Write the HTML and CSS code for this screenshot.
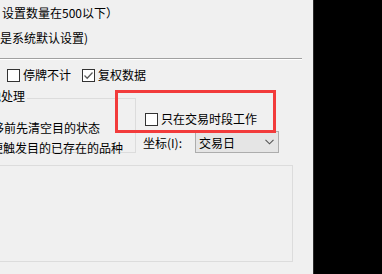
FILE: index.html
```html
<!DOCTYPE html>
<html lang="zh-CN">
<head>
    <meta charset="UTF-8">
    <title>设置</title>
    <link rel="stylesheet" href="styles.css">
</head>
<body>

<div class="dialog">
    <!-- hint text -->
    <div class="note">
        <div class="note-line first">设置数量在500以下）</div>
        <div class="note-line">是系统默认设置)</div>
    </div>

    <div class="sep"></div>

    <!-- options -->
    <div class="checks">
        <label class="check"><span class="box"></span>停牌不计</label>
        <label class="check"><span class="box checked">
            <svg width="11" height="11" viewBox="0 0 11 11"><path d="M1.5 5.5 L4.2 8.2 L9.5 2.5" fill="none" stroke="#5c5c5c" stroke-width="1.3"/></svg>
        </span>复权数据</label>
    </div>

    <div class="middle">
        <fieldset class="group">
            <legend>其他处理</legend>
            <div class="opt opt-a">转移前先清空目的状态</div>
            <div class="opt opt-b">即便触发目的已存在的品种</div>
        </fieldset>

        <div class="side">
            <label class="check work"><span class="box"></span>只在交易时段工作</label>
            <div class="coord">
                <span class="coord-label">坐标(I):</span>
                <div class="combo">
                    <span>交易日</span>
                    <svg width="9" height="6" viewBox="0 0 9 6"><path d="M0.5 0.8 L4.5 4.8 L8.5 0.8" fill="none" stroke="#555" stroke-width="1.1"/></svg>
                </div>
            </div>
        </div>
    </div>

    <div class="group-low"></div>

    <!-- highlight marker -->
    <div class="mark"></div>
</div>

</body>
</html>
```

FILE: styles.css
```css
body {
    margin: 0;
    background-color: #000;
    font-family: "Noto Sans CJK SC", "Liberation Sans", sans-serif;
    font-size: 12px;
    color: #000;
    overflow: hidden;
}
.dialog {
    position: relative;
    width: 313px;
    height: 274px;
    background-color: #f0f0f0;
    border-right: 1px solid #2c2c2c;
    overflow: hidden;
}
.note-line {
    line-height: 25px;
    white-space: nowrap;
}
.note-line.first {
    padding-left: 2px;
}
.sep {
    width: 302px;
    margin-top: 8px;
    border-top: 1px solid #a0a0a0;
    border-bottom: 1px solid #fff;
}
.checks {
    display: flex;
    align-items: center;
    height: 20px;
    margin-top: 5px;
    padding-left: 7px;
    gap: 11px;
}
.check {
    display: flex;
    align-items: center;
    gap: 3px;
    line-height: 16px;
    white-space: nowrap;
}
.box {
    display: flex;
    align-items: center;
    justify-content: center;
    width: 11px;
    height: 11px;
    border: 1px solid #333;
    background-color: #fff;
}
.middle {
    display: flex;
    height: 68px;
}
.group {
    box-sizing: border-box;
    width: 176px;
    margin: 3px 0 0 -40px;
    padding: 10px 0 2px 0;
    border: 1px solid #dcdcdc;
    border-left: none;
    min-width: 0;
}
.group legend {
    margin-left: 17px;
    padding: 0 2px 4px 0;
    line-height: 16px;
}
.opt {
    line-height: 20px;
    white-space: nowrap;
}
.opt-a {
    margin-left: 20px;
}
.opt-b {
    margin-left: 19px;
}
.side {
    display: flex;
    flex-direction: column;
    padding-top: 26px;
}
.work {
    margin-left: 9px;
}
.coord {
    display: flex;
    align-items: center;
    height: 22px;
    margin-top: 4px;
    padding-left: 7px;
}
.coord-label {
    width: 52px;
    white-space: nowrap;
}
.combo {
    box-sizing: border-box;
    display: flex;
    align-items: center;
    justify-content: space-between;
    width: 84px;
    height: 22px;
    padding: 0 4px 0 3px;
    background-color: #e5e5e5;
    border: 1px solid #adadad;
}
.group-low {
    box-sizing: border-box;
    width: 303px;
    height: 97px;
    margin: 12px 0 0 -10px;
    border: 1px solid #dcdcdc;
}
.mark {
    position: absolute;
    left: 115px;
    top: 90px;
    width: 155px;
    height: 37px;
    border: 3px solid #f23b3b;
}
```
